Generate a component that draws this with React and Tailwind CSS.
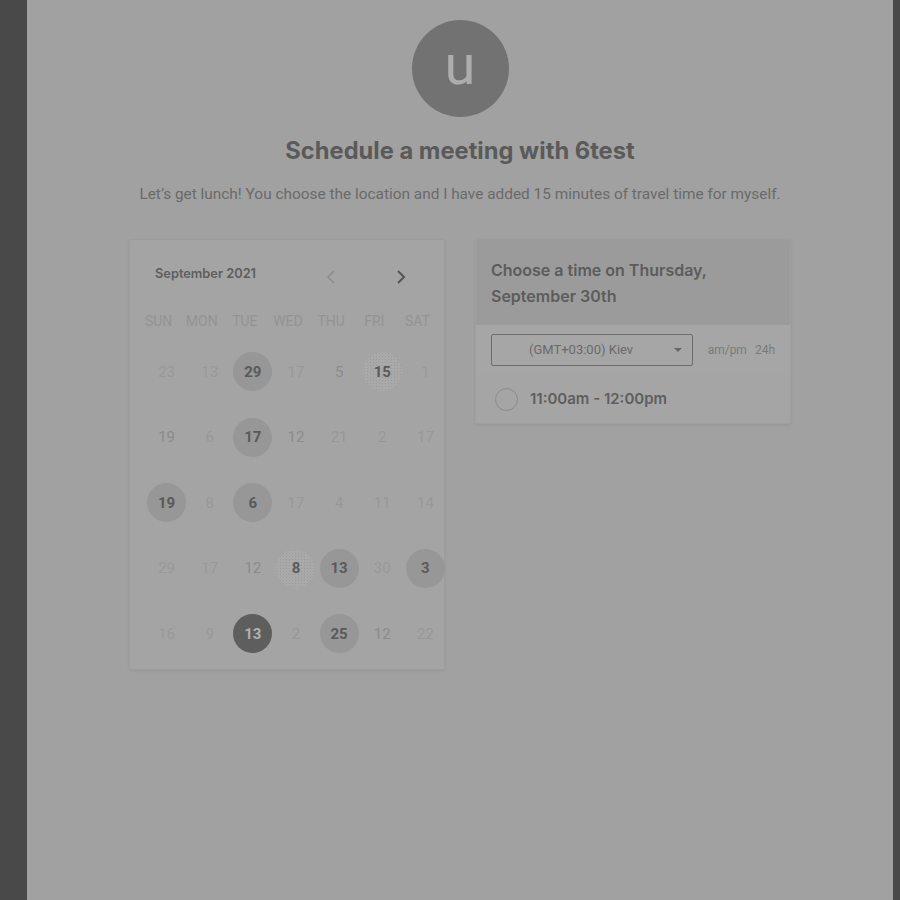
import React from "react";

const rows = [
  [["23","f"],["13","f"],["29","b"],["17","f"],["5","m"],["15","t"],["1","f"]],
  [["19","m"],["6","f"],["17","b"],["12","m"],["21","f"],["2","f"],["17","f"]],
  [["19","b"],["8","f"],["6","b"],["17","f"],["4","f"],["11","f"],["14","f"]],
  [["29","f"],["17","f"],["12","m"],["8","t"],["13","b"],["30","f"],["3","b"]],
  [["16","f"],["9","f"],["13","d"],["2","f"],["25","b"],["12","m"],["22","f"]],
];

const days = ["SUN","MON","TUE","WED","THU","FRI","SAT"];

function Day({ n, k }) {
  if (k === "b") {
    return (
      <div className="w-[39px] h-[39px] rounded-full bg-[#979797] flex items-center justify-center text-[15px] font-bold text-[#5a5a5a]">{n}</div>
    );
  }
  if (k === "d") {
    return (
      <div className="w-[39px] h-[39px] rounded-full bg-[#5e5e5e] flex items-center justify-center text-[15px] font-bold text-[#b0b0b0]">{n}</div>
    );
  }
  if (k === "t") {
    return (
      <div className="w-[39px] h-[39px] rounded-full bg-[#a9a9a9] bg-[radial-gradient(circle,#9a9a9a_0.8px,transparent_1px)] bg-[length:3px_3px] flex items-center justify-center text-[15px] font-bold text-[#5a5a5a]">{n}</div>
    );
  }
  return (
    <div className={"w-[39px] h-[39px] flex items-center justify-center text-[15px] " + (k === "m" ? "text-[#8b8b8b]" : "text-[#989898]")}>{n}</div>
  );
}

export default function App() {
  return (
    <div className="flex w-[900px] h-[900px] overflow-hidden font-['Roboto',sans-serif]">
      <div className="w-[27px] bg-[#494949]" />
      <div className="w-[866px] bg-[#a1a1a1] flex flex-col items-center pt-[20px]">
        <div className="w-[97px] h-[97px] rounded-full bg-[#727272] flex items-center justify-center">
          <span className="text-[56px] leading-none text-[#adadad] -mt-[8px]">u</span>
        </div>
        <h1 className="mt-[19px] text-[23.7px] leading-[30px] font-bold text-[#5a5a5a] font-['Inter',sans-serif]">Schedule a meeting with 6test</h1>
        <p className="mt-[18px] text-[15.4px] leading-[20px] text-[#6a6a6a]">Let’s get lunch! You choose the location and I have added 15 minutes of travel time for myself.</p>

        <div className="mt-[35px] flex gap-[30px] items-start">
          {/* Calendar card */}
          <div className="w-[316px] h-[431px] bg-[#a4a4a4] border border-[#9c9c9c] rounded-[2px] shadow-[0_1px_3px_rgba(0,0,0,0.06)] pt-[21px]">
            <div className="flex items-center h-[26px] pl-[25px]">
              <span className="text-[12.8px] font-semibold text-[#5e5e5e] font-['Inter',sans-serif] w-[170px]">September 2021</span>
              <svg width="10" height="16" viewBox="0 0 10 16" className="ml-[1px] mt-[6px]">
                <path d="M8 2 L2 8 L8 14" fill="none" stroke="#8e8e8e" strokeWidth="1.6" />
              </svg>
              <svg width="10" height="16" viewBox="0 0 10 16" className="ml-[60px] mt-[6px]">
                <path d="M2 2 L8 8 L2 14" fill="none" stroke="#555" strokeWidth="2" />
              </svg>
            </div>
            <div className="grid grid-cols-7 w-[302px] ml-[7px] mt-[24px] h-[20px] items-center text-[14px] text-[#939393]">
              {days.map((d) => (
                <div key={d} className="text-center">{d}</div>
              ))}
            </div>
            <div className="grid grid-cols-7 w-[302px] ml-[15px] mt-[8px]">
              {rows.flat().map(([n, k], i) => (
                <div key={i} className="h-[65.5px] flex items-center justify-center">
                  <Day n={n} k={k} />
                </div>
              ))}
            </div>
          </div>

          {/* Time card */}
          <div className="w-[316px] bg-[#a5a5a5] rounded-[2px] shadow-[0_1px_3px_rgba(0,0,0,0.08)] border border-[#a0a0a0] -mt-[1px]">
            <div className="bg-[#9b9b9b] px-[15px] pt-[18px] pb-[15px] h-[86px]">
              <div className="text-[16px] leading-[26px] font-semibold text-[#5c5c5c] font-['Inter',sans-serif]">Choose a time on Thursday,<br />September 30th</div>
            </div>
            <div className="flex items-center px-[15px] pt-[9px] pb-[8px] bg-[#a6a6a6]">
              <div className="w-[202px] h-[32px] border border-[#6e6e6e] rounded-[2px] flex items-center relative">
                <span className="ml-[37px] text-[13px] text-[#6a6a6a]">(GMT+03:00) Kiev</span>
                <svg width="8" height="5" viewBox="0 0 8 5" className="absolute right-[10px] top-[13px]">
                  <path d="M0 0 L8 0 L4 4 Z" fill="#666" />
                </svg>
              </div>
              <span className="ml-[15px] text-[12px] text-[#7a7a7a]">am/pm</span>
              <span className="ml-[8px] text-[12px] text-[#7a7a7a]">24h</span>
            </div>
            <div className="flex items-center h-[49px] pl-[19px] pt-[1px]">
              <div className="w-[23px] h-[23px] rounded-full border-[1.5px] border-[#8a8a8a]" />
              <span className="ml-[12px] text-[15px] font-semibold text-[#5e5e5e] font-['Inter',sans-serif]">11:00am - 12:00pm</span>
            </div>
          </div>
        </div>
      </div>
      <div className="w-[7px] bg-[#494949]" />
    </div>
  );
}
